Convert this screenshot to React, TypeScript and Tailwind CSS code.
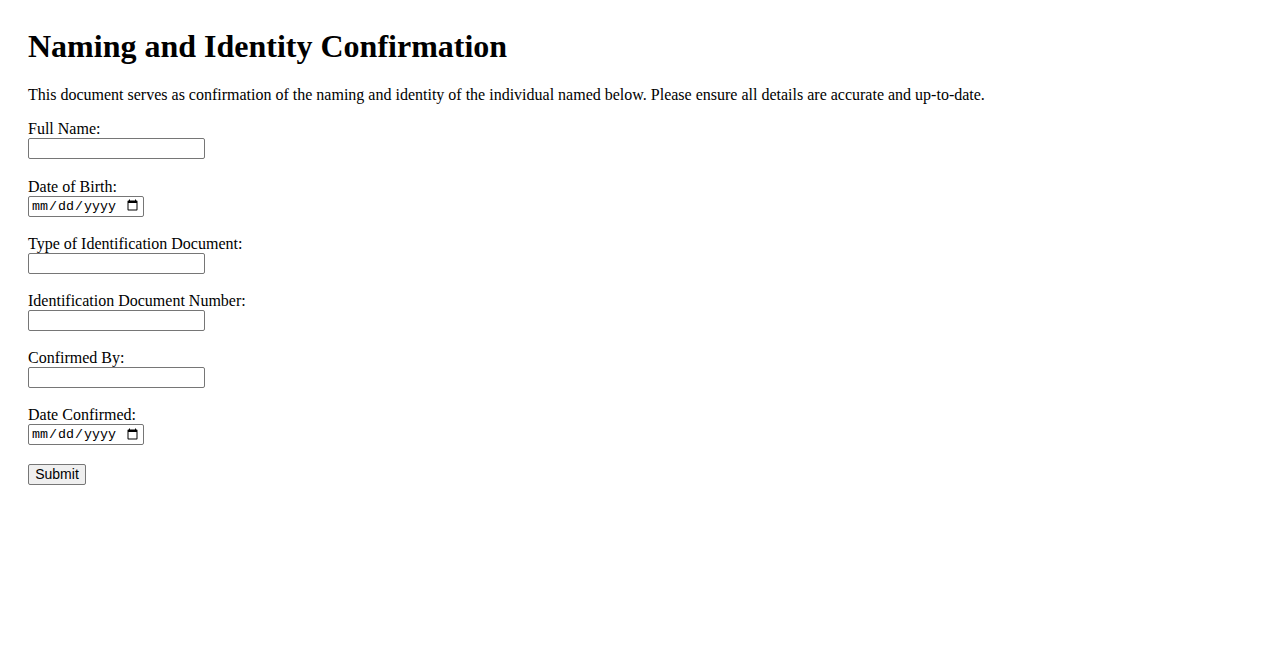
const fields = [
  { id: 'full-name', label: 'Full Name:', type: 'text' },
  { id: 'dob', label: 'Date of Birth:', type: 'date' },
  { id: 'id-type', label: 'Type of Identification Document:', type: 'text' },
  { id: 'id-number', label: 'Identification Document Number:', type: 'text' },
  { id: 'confirmed-by', label: 'Confirmed By:', type: 'text' },
  { id: 'date-confirmed', label: 'Date Confirmed:', type: 'date' },
] as const

function App() {
  return (
    <div className="min-h-screen bg-white px-7 pt-7 font-['Liberation_Serif',serif] text-[16px] leading-[normal] text-black">
      <h1 className="mb-[21.44px] text-[32px] font-bold leading-[normal]">Naming and Identity Confirmation</h1>
      <p className="mb-4">
        This document serves as confirmation of the naming and identity of the individual named below. Please ensure all
        details are accurate and up-to-date.
      </p>

      <form onSubmit={(e) => e.preventDefault()}>
        {fields.map((field) => (
          <div key={field.id} className="mb-[18.2px]">
            <label htmlFor={field.id} className="block h-[18px]">
              {field.label}
            </label>
            {field.type === 'date' ? (
              <input
                id={field.id}
                type="date"
                className="block h-[21px] w-[116px] rounded-[2px] border border-[#767676] px-[2px] py-[1px] font-['Liberation_Mono',monospace] text-[13.33px] leading-[normal] text-black"
              />
            ) : (
              <input
                id={field.id}
                type="text"
                className="block h-[21px] w-[177px] rounded-[2px] border border-[#767676] px-[2px] py-[1px] font-['Liberation_Sans',Arial,sans-serif] text-[13.33px] leading-[normal]"
              />
            )}
          </div>
        ))}
        <button
          type="submit"
          className="h-[21px] w-[58px] rounded-[2px] border border-[#767676] bg-[#efefef] px-[6px] py-[1px] font-['Liberation_Sans',Arial,sans-serif] text-[14px] leading-[normal] text-black"
        >
          Submit
        </button>
      </form>
    </div>
  )
}

export default App
